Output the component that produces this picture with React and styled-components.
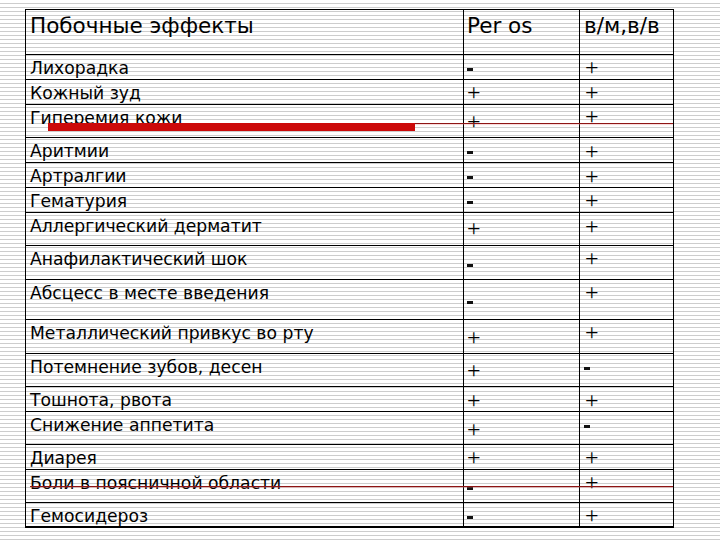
import React from "react";
import styled, { createGlobalStyle } from "styled-components";

const GlobalStyle = createGlobalStyle`
    html, body {
        margin: 0;
        padding: 0;
    }
    body {
        width: 720px;
        height: 540px;
        overflow: hidden;
        background: repeating-linear-gradient(
            to bottom,
            #ffffff 0px,
            #ffffff 3px,
            #cdcdcd 3px,
            #cdcdcd 4px
        );
        font-family: "DejaVu Sans", Verdana, sans-serif;
        color: #000;
    }
`;

const Page = styled.div`
    width: 720px;
    height: 540px;
    padding: 9px 0 0 25px;
    box-sizing: border-box;
`;

const Table = styled.div`
    position: relative;
    width: 649px;
    border: 1px solid #000;
    box-sizing: border-box;
`;

const Row = styled.div`
    display: grid;
    grid-template-columns: 438px 116px 93px;
    height: ${(p) => p.$h}px;
    border-bottom: 1px solid #000;
    box-sizing: border-box;

    &:last-child {
        border-bottom: none;
    }
`;

const Cell = styled.div`
    border-right: ${(p) => (p.$last ? "none" : "1px solid #000")};
    padding: ${(p) => p.$pt || 0}px 0 0 ${(p) => p.$pl || 0}px;
    box-sizing: border-box;
    min-width: 0;
`;

const HeadText = styled.div`
    font-size: 21.5px;
    line-height: 24px;
    white-space: nowrap;
`;

const BodyText = styled.div`
    font-size: 17.2px;
    line-height: 20px;
    white-space: nowrap;
`;

const Plus = styled.div`
    font-family: "Liberation Serif", "Times New Roman", serif;
    font-size: 24px;
    line-height: 20px;
    height: 20px;
    color: #000;
    margin-top: ${(p) => p.$y - 12}px;
`;

const Minus = styled.div`
    width: 6px;
    height: 3px;
    background: #111;
    margin-top: ${(p) => p.$y - 1}px;
`;

const RedBar = styled.div`
    position: absolute;
    left: 22px;
    top: 113px;
    width: 367px;
    height: 8px;
    background: #cc0a0a;
`;

const RedLine = styled.div`
    position: absolute;
    left: ${(p) => p.$x}px;
    top: ${(p) => p.$y}px;
    right: 0;
    height: 1px;
    background: #8e1414;
    box-shadow: 0 1px 1px rgba(230, 120, 120, 0.35);
`;

const rows = [
    { h: 25, name: "Лихорадка", per: ["-", 14], iv: ["+", 14] },
    { h: 25, name: "Кожный зуд", per: ["+", 14], iv: ["+", 14] },
    { h: 33, name: "Гиперемия кожи", per: ["+", 18], iv: ["+", 13] },
    { h: 25, name: "Аритмии", per: ["-", 14], iv: ["+", 15] },
    { h: 25, name: "Артралгии", per: ["-", 14], iv: ["+", 15] },
    { h: 25, name: "Гематурия", per: ["-", 14], iv: ["+", 14] },
    { h: 33, name: "Аллергический дерматит", per: ["+", 17], iv: ["+", 15] },
    { h: 34, name: "Анафилактический шок", per: ["-", 19], iv: ["+", 14] },
    { h: 40, name: "Абсцесс в месте введения", per: ["-", 22], iv: ["+", 14] },
    { h: 34, name: "Металлический привкус во рту", per: ["+", 19], iv: ["+", 14] },
    { h: 33, name: "Потемнение зубов, десен", per: ["+", 18], iv: ["-", 14] },
    { h: 25, name: "Тошнота, рвота", per: ["+", 15], iv: ["+", 15] },
    { h: 33, name: "Снижение аппетита", per: ["+", 19], iv: ["-", 14] },
    { h: 25, name: "Диарея", per: ["+", 14], iv: ["+", 14] },
    { h: 33, name: "Боли в поясничной области", per: ["-", 18], iv: ["+", 14] },
    { h: 24, name: "Гемосидероз", per: ["-", 14], iv: ["+", 14] },
];

const Mark = ({ value }) =>
    value[0] === "+" ? <Plus $y={value[1]}>+</Plus> : <Minus $y={value[1]} />;

export default function App() {
    return (
        <>
            <GlobalStyle />
            <Page>
                <Table>
                    <Row $h={45}>
                        <Cell $pl={4} $pt={4}>
                            <HeadText>Побочные эффекты</HeadText>
                        </Cell>
                        <Cell $pl={3} $pt={4}>
                            <HeadText>Per os</HeadText>
                        </Cell>
                        <Cell $pl={4} $pt={4} $last>
                            <HeadText>в/м,в/в</HeadText>
                        </Cell>
                    </Row>
                    {rows.map((r) => (
                        <Row key={r.name} $h={r.h}>
                            <Cell $pl={4} $pt={3}>
                                <BodyText>{r.name}</BodyText>
                            </Cell>
                            <Cell $pl={3}>
                                <Mark value={r.per} />
                            </Cell>
                            <Cell $pl={r.iv[0] === "+" ? 5 : 4} $last>
                                <Mark value={r.iv} />
                            </Cell>
                        </Row>
                    ))}
                    <RedLine $x={22} $y={113} />
                    <RedBar />
                    <RedLine $x={4} $y={476} />
                </Table>
            </Page>
        </>
    );
}
